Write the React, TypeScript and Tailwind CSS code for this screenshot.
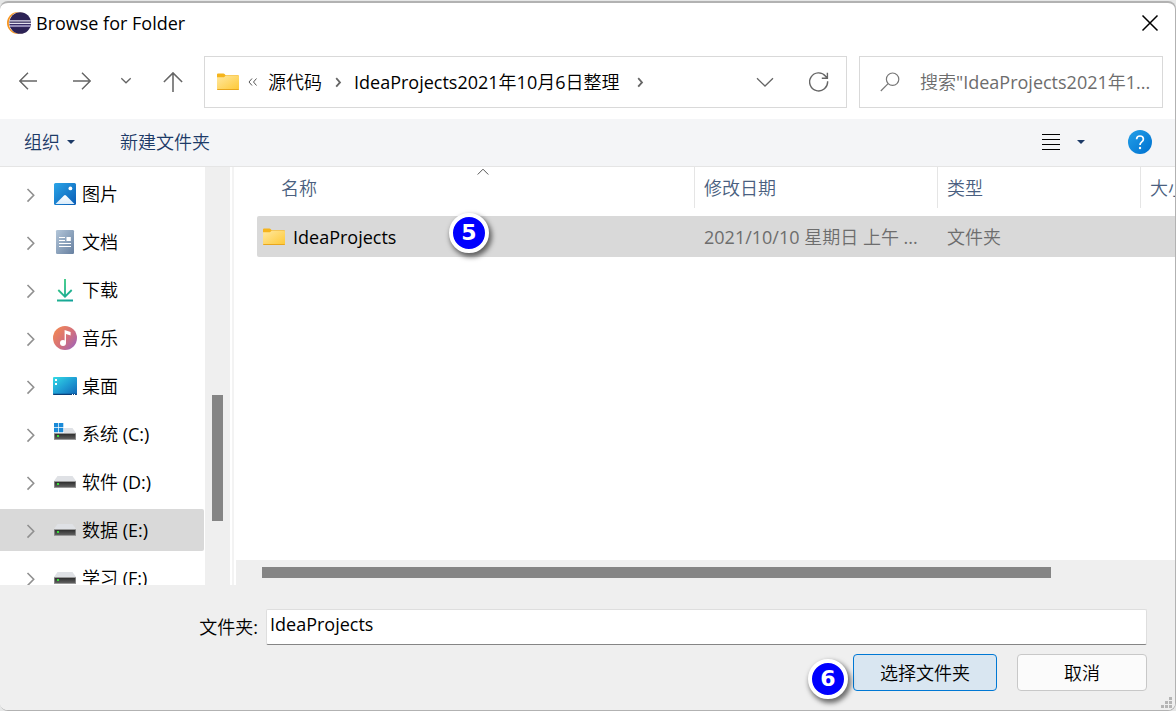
import { useState } from "react";
import type { ReactNode } from "react";

type TreeItem = { name: string; icon: ReactNode };

function Chevron({ d, className }: { d: string; className: string }) {
  return (
    <svg
      viewBox="0 0 18 18"
      className={className}
      fill="none"
      stroke="currentColor"
      aria-hidden="true"
    >
      <path d={d} />
    </svg>
  );
}

function EclipseIcon() {
  return (
    <svg viewBox="0 0 24 24" className="h-6 w-6" aria-hidden="true">
      <circle cx="11" cy="12" r="11" fill="#f7941e" />
      <circle cx="12.5" cy="12" r="10.7" fill="#fff" />
      <circle cx="13.2" cy="12" r="10.8" fill="#2c2255" />
      <path d="M2.6 13.5h21.2a10.8 10.8 0 0 1-.7 2.7H3.3z" fill="#41337a" />
      <path
        d="M2.6 9.8h21.2M2.2 12.4h21.8M2.6 15h21.2"
        stroke="#e4e1ef"
        strokeWidth="1.2"
      />
    </svg>
  );
}

function FolderIcon() {
  return (
    <svg viewBox="0 0 22 18" className="h-[18px] w-[22px] shrink-0" aria-hidden="true">
      <defs>
        <linearGradient id="folder" x1="0" y1="0" x2="1" y2="1">
          <stop offset="0" stopColor="#ffe8a0" />
          <stop offset="1" stopColor="#fec834" />
        </linearGradient>
      </defs>
      <path d="M0 1.5Q0 .5 1 .5h5.5q.7 0 1.1.5l1 1.2H21q1 0 1 1V8H0z" fill="#f5b41c" />
      <path d="M0 4.2h7l1.6-1.4H21q1 0 1 1V16q0 1-1 1H1q-1 0-1-1z" fill="url(#folder)" />
      <path d="M0 16q0 1 1 1h20q1 0 1-1z" fill="#e8a61d" />
    </svg>
  );
}

function PicturesIcon() {
  return (
    <svg viewBox="0 0 24 24" className="h-6 w-6">
      <defs>
        <linearGradient id="pic" x1="0" y1="0" x2="1" y2="1">
          <stop offset="0" stopColor="#2aa5e8" />
          <stop offset="1" stopColor="#0a5cb5" />
        </linearGradient>
        <linearGradient id="hill" x1="0" y1="0" x2="0" y2="1">
          <stop offset="0" stopColor="#fff" />
          <stop offset="1" stopColor="#d9ecfb" />
        </linearGradient>
      </defs>
      <rect x="1" y="1" width="22" height="22" rx="1.5" fill="url(#pic)" />
      <path d="M2.5 22 11 13.4q1-1 2 0l8.5 8.6z" fill="url(#hill)" />
      <circle cx="17.4" cy="6.4" r="1.9" fill="#fff" />
    </svg>
  );
}

function DocumentsIcon() {
  return (
    <svg viewBox="0 0 24 24" className="h-6 w-6">
      <defs>
        <linearGradient id="doc" x1="0" y1="0" x2="1" y2="1">
          <stop offset="0" stopColor="#b3c6d9" />
          <stop offset="1" stopColor="#6780a0" />
        </linearGradient>
      </defs>
      <rect x="3" y="0" width="18" height="24" rx="1.3" fill="url(#doc)" />
      <path d="M6 7.5h6M6 10.5h6M6 13.5h12M6 16.5h12" stroke="#fff" strokeWidth="1.1" />
      <rect x="13.5" y="7" width="4.3" height="4" fill="#fff" />
    </svg>
  );
}

function DownloadsIcon() {
  return (
    <svg viewBox="0 0 24 24" className="h-6 w-6" fill="none">
      <defs>
        <linearGradient
          id="down"
          x1="4"
          y1="0"
          x2="20"
          y2="24"
          gradientUnits="userSpaceOnUse"
        >
          <stop offset="0" stopColor="#3fd37c" />
          <stop offset="1" stopColor="#0e9f9b" />
        </linearGradient>
      </defs>
      <path d="M12 1v17M5.3 12l6.7 6.7 6.7-6.7M4 22.5h16" stroke="url(#down)" strokeWidth="1.8" />
    </svg>
  );
}

function MusicIcon() {
  return (
    <svg viewBox="0 0 24 24" className="h-6 w-6">
      <defs>
        <linearGradient id="music" x1="0" y1="0.1" x2="1" y2="0.9">
          <stop offset="0" stopColor="#f58a50" />
          <stop offset="0.55" stopColor="#d36f7c" />
          <stop offset="1" stopColor="#9b63bd" />
        </linearGradient>
      </defs>
      <circle cx="12" cy="12" r="12" fill="url(#music)" />
      <circle cx="10" cy="17" r="3" fill="#fff" />
      <path d="M11.6 17V4l6 2v3.6l-4.6-1.5V17z" fill="#fff" />
    </svg>
  );
}

function DesktopIcon() {
  return (
    <svg viewBox="0 0 24 24" className="h-6 w-6">
      <defs>
        <linearGradient id="desk" x1="0" y1="0" x2="1" y2="1">
          <stop offset="0" stopColor="#34dbe5" />
          <stop offset="0.5" stopColor="#1f9fd5" />
          <stop offset="1" stopColor="#1065b5" />
        </linearGradient>
      </defs>
      <rect x="0" y="3" width="24" height="18" rx="1" fill="url(#desk)" />
      <path d="M0 19.8h24v.2q0 1-1 1H1q-1 0-1-1z" fill="#0b3f78" />
      <path d="M2 5h2v2H2zM2 9h2v2H2zM19 20h1v1h-1zM21 20h1v1h-1z" fill="#fff" />
    </svg>
  );
}

function DriveIcon({ system }: { system?: boolean }) {
  return (
    <svg viewBox="0 0 24 24" className="h-6 w-6">
      <defs>
        <linearGradient id="drive" x1="0" y1="0" x2="0" y2="1">
          <stop offset="0" stopColor="#2f2f2f" />
          <stop offset="1" stopColor="#606060" />
        </linearGradient>
      </defs>
      <path d="M4.5 6h15L23 11H1z" fill="#dfe1e5" />
      <path d="M1 11h22v7H1z" fill="#999" />
      <path d="M1.7 12h20.6v5H1.7z" fill="url(#drive)" />
      <path d="M4 13h2v2H4z" fill="#3ae03a" />
      {system && (
        <>
          <path d="M0 0h11v11H0z" fill="#fff" />
          <path d="M1 1h4.3v4.3H1zM6 1h4.3v4.3H6zM1 6h4.3v4.3H1zM6 6h4.3v4.3H6z" fill="#1a8ad8" />
        </>
      )}
    </svg>
  );
}

const treeItems: TreeItem[] = [
  { name: "图片", icon: <PicturesIcon /> },
  { name: "文档", icon: <DocumentsIcon /> },
  { name: "下载", icon: <DownloadsIcon /> },
  { name: "音乐", icon: <MusicIcon /> },
  { name: "桌面", icon: <DesktopIcon /> },
  { name: "系统 (C:)", icon: <DriveIcon system /> },
  { name: "软件 (D:)", icon: <DriveIcon /> },
  { name: "数据 (E:)", icon: <DriveIcon /> },
  { name: "学习 (F:)", icon: <DriveIcon /> },
];

function StepBadge({ step, className }: { step: number; className: string }) {
  return (
    <span
      className={`absolute flex h-10 w-10 items-center justify-center rounded-full border-4 border-white bg-[#0000fe] font-['DejaVu_Sans',sans-serif] text-[22px] leading-none font-bold text-white shadow-[2px_3px_5px_1px_rgba(0,0,0,0.55)] ${className}`}
    >
      {step}
    </span>
  );
}

function TitleBar() {
  return (
    <header className="flex h-10 shrink-0 items-center pr-4 pl-[7px]">
      <EclipseIcon />
      <h1 className="ml-[5px] flex-1">Browse for Folder</h1>
      <button aria-label="关闭" className="text-black">
        <svg viewBox="0 0 18 18" className="h-[18px] w-[18px]" stroke="currentColor" strokeWidth="1.5">
          <path d="M1.5 1.5l15 15M16.5 1.5l-15 15" />
        </svg>
      </button>
    </header>
  );
}

function NavBar() {
  return (
    <nav className="flex h-[76px] shrink-0 items-center pt-[2px] pr-3 text-[#666]">
      <div className="flex w-[204px] shrink-0 pl-px">
        <button aria-label="后退" className="flex w-[54px] justify-center">
          <Chevron d="M18 9H.8M9 .8.8 9 9 17.2" className="h-[18px] w-[18px] stroke-[1.4]" />
        </button>
        <button aria-label="前进" className="flex w-[54px] justify-center">
          <Chevron d="M0 9h17.2M9 .8 17.2 9 9 17.2" className="h-[18px] w-[18px] stroke-[1.4]" />
        </button>
        <button aria-label="最近位置" className="flex w-[34px] justify-center">
          <Chevron d="M4.3 6.2 9 10.8l4.7-4.6" className="h-[18px] w-[18px] stroke-[1.3]" />
        </button>
        <button aria-label="上移" className="flex w-[60px] justify-center">
          <Chevron d="M9 18V.8M.8 9 9 .8 17.2 9" className="h-5 w-5 stroke-[1.4]" />
        </button>
      </div>
      <div className="flex h-[52px] flex-1 items-center border border-[#d9d9d9] pr-[17px] pl-3 text-black">
        <FolderIcon />
        <Chevron
          d="M8 5.5 5 9l3 3.5M12.5 5.5l-3 3.5 3 3.5"
          className="ml-[5px] h-[18px] w-[18px] text-[#555]"
        />
        <a href="#source" className="ml-[6px] whitespace-nowrap">
          源代码
        </a>
        <Chevron d="M7.2 5.2 11 9.4l-3.8 4.2" className="mx-[7px] h-[18px] w-[18px] stroke-[1.8] text-[#666]" />
        <a href="#projects" className="whitespace-nowrap">
          IdeaProjects2021年10月6日整理
        </a>
        <Chevron d="M7.2 5.2 11 9.4l-3.8 4.2" className="ml-3 h-[18px] w-[18px] stroke-[1.8] text-[#666]" />
        <button aria-label="历史记录" className="ml-auto text-[#666]">
          <Chevron d="M1 5.3 9 13l8-7.7" className="h-[18px] w-[18px] stroke-[1.3]" />
        </button>
        <button aria-label="刷新" className="ml-[35px] text-[#666]">
          <svg viewBox="0 0 20 20" className="h-5 w-5" fill="none" stroke="currentColor" strokeWidth="1.4">
            <path d="M18.6 9.2A9 9 0 1 1 16.6 4.2L18.4 6.2M18.4.8v5.5h-5.6" />
          </svg>
        </button>
      </div>
      <div className="ml-3 flex h-[52px] w-[304px] items-center border border-[#d9d9d9] pr-1 pl-5">
        <svg viewBox="0 0 20 20" className="h-5 w-5 shrink-0" fill="none" stroke="#777" strokeWidth="1.2" aria-hidden="true">
          <circle cx="12.6" cy="7.2" r="6.2" />
          <path d="M8.1 11.7.8 19" />
        </svg>
        <input
          type="text"
          aria-label="搜索"
          placeholder={'搜索"IdeaProjects2021年1...'}
          className="ml-5 h-full min-w-0 flex-1 outline-none placeholder:text-[#6d6d6d]"
        />
      </div>
    </nav>
  );
}

function Toolbar() {
  return (
    <div className="flex h-12 shrink-0 items-center border-b border-[#e5e5e5] bg-[#f4f5f7] pr-[23px] pb-[2px] pl-6 text-[#1c3a67]">
      <button className="flex items-center gap-[7px]">
        组织
        <svg viewBox="0 0 8 4" className="h-1 w-2" fill="currentColor" aria-hidden="true">
          <path d="M0 0h8L4 4z" />
        </svg>
      </button>
      <button className="ml-[45px]">新建文件夹</button>
      <button aria-label="更改视图" className="ml-auto flex items-center gap-[17px]">
        <svg viewBox="0 0 18 18" className="h-[18px] w-[18px]" stroke="#000">
          <path d="M0 1.5h18M0 6.5h18M0 11.5h18M0 16.5h18" />
        </svg>
        <svg viewBox="0 0 8 4" className="h-1 w-2" fill="currentColor">
          <path d="M0 0h8L4 4z" />
        </svg>
      </button>
      <button
        aria-label="帮助"
        className="ml-[43px] flex h-6 w-6 items-center justify-center rounded-full bg-linear-to-br from-[#23a0e8] to-[#0070cf]"
      >
        <svg viewBox="0 0 24 24" className="h-6 w-6" fill="none" stroke="#fff" strokeWidth="1.7">
          <path d="M8.6 9.2Q8.7 6 12 6t3.4 3q0 1.6-1.7 2.9T12 15" />
          <circle cx="12" cy="18" r="1.2" fill="#fff" stroke="none" />
        </svg>
      </button>
    </div>
  );
}

function Sidebar() {
  const [selected, setSelected] = useState("数据 (E:)");

  return (
    <aside className="flex min-h-0 w-[230px] shrink-0">
      <ul className="flex w-[205px] flex-col gap-[6px] overflow-hidden pt-[6px] pr-px">
        {treeItems.map((item) => (
          <li key={item.name} className="shrink-0">
            <button
              onClick={() => setSelected(item.name)}
              className={`flex h-[42px] w-full items-center rounded-r-xs pl-[22px] ${item.name === selected ? "bg-[#d9d9d9]" : ""}`}
            >
              <Chevron
                d="M5.5 4 11.7 10.3l-6.2 6.3"
                className="h-[18px] w-[18px] stroke-[1.6] text-[#909090]"
              />
              <span className="ml-[13px]">{item.icon}</span>
              <span className="ml-[5px]">{item.name}</span>
            </button>
          </li>
        ))}
      </ul>
      <div className="flex w-[25px] flex-col items-center bg-[#efefef]">
        <div className="flex-[228]" />
        <div className="w-[11px] flex-[126] bg-[#858585]" />
        <div className="flex-[64]" />
      </div>
    </aside>
  );
}

function FileList() {
  return (
    <main className="ml-[2px] flex min-w-0 flex-1 flex-col border-l-2 border-[#f3f3f3] pl-[2px]">
      <div className="min-h-0 flex-1 overflow-hidden pl-[21px]">
        <table className="w-[984px] min-w-full table-fixed border-separate border-spacing-0 text-left">
          <thead className="text-[#4a5f80]">
            <tr>
              <th className="relative w-[438px] p-0 font-normal">
                <Chevron
                  d="M3.7 11.5 9 6.2l5.3 5.3"
                  className="absolute -top-1 left-1/2 ml-[-2px] h-[18px] w-[18px] text-[#555]"
                />
                <div className="mb-2 flex h-[41px] items-center border-r border-[#e5e5e5] pl-6">
                  名称
                </div>
              </th>
              <th className="w-[243px] p-0 font-normal">
                <div className="mb-2 flex h-[41px] items-center border-r border-[#e5e5e5] pl-[9px]">
                  修改日期
                </div>
              </th>
              <th className="w-[203px] p-0 font-normal">
                <div className="mb-2 flex h-[41px] items-center border-r border-[#e5e5e5] pl-[9px]">
                  类型
                </div>
              </th>
              <th className="p-0 font-normal">
                <div className="mb-2 flex h-[41px] items-center pl-[9px]">大小</div>
              </th>
            </tr>
          </thead>
          <tbody>
            <tr className="h-[41px] bg-[#d9d9d9] text-[#6d6d6d]">
              <td className="relative rounded-l-xs p-0 text-black">
                <div className="flex items-center gap-2 pl-[6px]">
                  <FolderIcon />
                  IdeaProjects
                </div>
                <StepBadge step={5} className="-top-[3px] left-48" />
              </td>
              <td className="truncate py-0 pr-2 pl-[9px]">2021/10/10 星期日 上午 ...</td>
              <td className="py-0 pl-[9px]">文件夹</td>
              <td />
            </tr>
          </tbody>
        </table>
      </div>
      <div className="flex h-[25px] shrink-0 items-center bg-[#efefef]">
        <div className="flex-[26]" />
        <div className="h-[11px] flex-[789] bg-[#858585]" />
        <div className="flex-[124]" />
      </div>
    </main>
  );
}

function Footer() {
  return (
    <footer className="relative shrink-0 bg-[#efefef] pt-6 pr-7 pb-[19px]">
      <div className="flex items-center">
        <label htmlFor="folder-name" className="w-[266px] pr-2 text-right">
          文件夹:
        </label>
        <input
          id="folder-name"
          defaultValue="IdeaProjects"
          className="h-9 min-w-0 flex-1 rounded-xs border border-[#dedede] border-b-[#858585] bg-white px-[3px] pb-[6px] outline-none"
        />
      </div>
      <div className="mt-[9px] flex justify-end gap-5">
        <div className="relative">
          <StepBadge step={6} className="top-[5px] -left-[45px]" />
          <button className="h-[37px] w-36 rounded-sm border border-[#0078d4] bg-[#d9e6f1]">
            选择文件夹
          </button>
        </div>
        <button className="h-[37px] w-[130px] rounded-sm border border-[#c8c8c8] bg-[#fbfbfb]">
          取消
        </button>
      </div>
      <svg
        viewBox="0 0 11 11"
        className="absolute right-[3px] bottom-[2px] h-[11px] w-[11px]"
        fill="#b5b5b5"
        aria-hidden="true"
      >
        <path d="M8 0h3v3H8zM4 4h3v3H4zM8 4h3v3H8zM0 8h3v3H0zM4 8h3v3H4zM8 8h3v3H8z" />
      </svg>
    </footer>
  );
}

export default function App() {
  return (
    <div className="h-screen bg-[#e6e7e7] pt-px font-['Open_Sans','Noto_Sans_CJK_SC_DemiLight','Noto_Sans_CJK_SC_Light','Noto_Sans_CJK_SC',sans-serif] text-lg text-black">
      <div className="flex h-full flex-col overflow-hidden rounded-lg border-t-2 border-r border-b border-[#b2b2b2] bg-white">
        <TitleBar />
        <NavBar />
        <Toolbar />
        <div className="flex min-h-0 flex-1">
          <Sidebar />
          <FileList />
        </div>
        <Footer />
      </div>
    </div>
  );
}
